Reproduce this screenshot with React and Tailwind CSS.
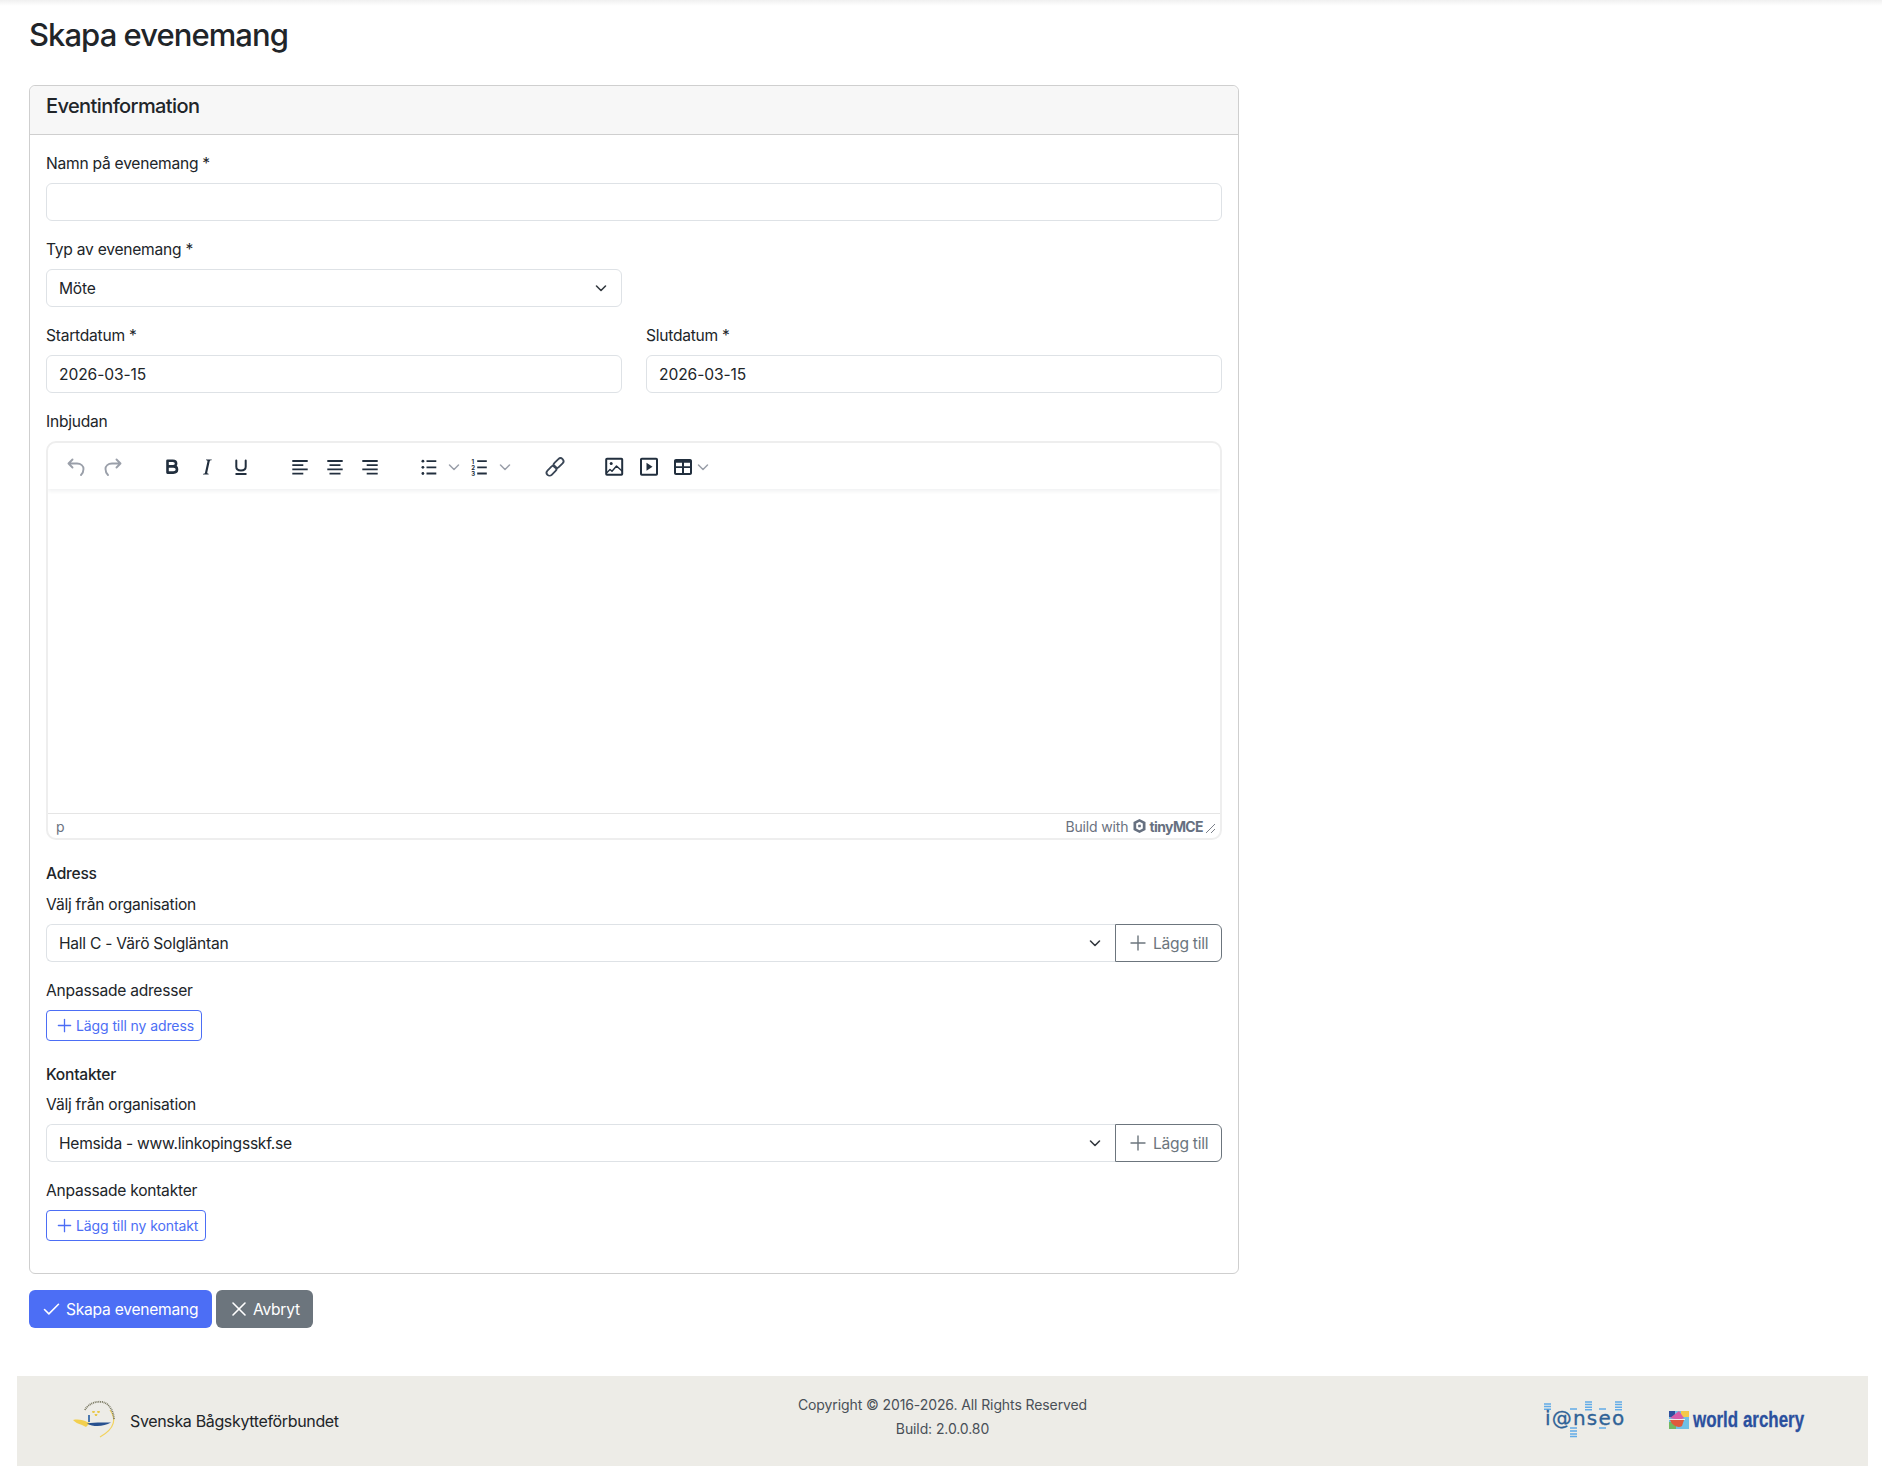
import React from "react";
import { Check, X, Plus } from "lucide-react";

const Chevron = ({ className = "" }) => (
  <svg width="16" height="16" viewBox="0 0 16 16" className={className} fill="none" stroke="#343a40" strokeWidth="1.600" strokeLinecap="round" strokeLinejoin="round">
    <path d="m3.500 6 4.500 4.500L12.500 6" />
  </svg>
);

const Field = ({ label, children, className = "" }) => (
  <div className={`mb-4 ${className}`}>
    <div className="mb-[7px] pt-[1px] text-[15.6px] leading-6 text-[#212529]">{label}</div>
    {children}
  </div>
);

const Box = ({ children, className = "" }) => (
  <div className={`flex h-[38px] items-center rounded-[6px] border border-[#dee2e6] bg-white px-[12px] text-[15.6px] leading-6 text-[#212529] ${className}`}>{children}</div>
);

const Val = ({ children }) => <span className="translate-y-[1px]">{children}</span>;

const Select = ({ children, className = "" }) => (
  <Box className={`justify-between ${className}`}>
    <Val>{children}</Val>
    <Chevron />
  </Box>
);

const Stroke = ({ children, c = "#222f3e", w = 1.900 }) => (
  <svg width="24" height="24" viewBox="0 0 24 24" fill="none" stroke={c} strokeWidth={w} strokeLinecap="round" strokeLinejoin="round" className="block">{children}</svg>
);

const Lines = ({ d }) => (
  <svg width="24" height="24" viewBox="0 0 24 24" fill="none" stroke="#222f3e" strokeWidth="1.800" className="block"><path d={d} /></svg>
);

const Btn = ({ className = "", children }) => <div className={`flex h-[24px] w-[24px] shrink-0 items-center justify-center ${className}`}>{children}</div>;

const Caret = () => (
  <svg width="24" height="24" viewBox="0 0 24 24" fill="none" stroke="#9a9fa9" strokeWidth="1.500" strokeLinecap="round" strokeLinejoin="round"><path d="m7.500 10 4.500 4.500 4.500-4.500" /></svg>
);

const Toolbar = () => (
  <div className="relative flex h-[46px] items-center pl-[16px] pt-[1px] shadow-[0_2px_4px_rgba(34,47,62,0.07)]">
    <Btn><Stroke c="#9a9fa9"><path d="M8.500 4.500 4.500 8.500l4 4M4.500 8.500H13c4 0 6.500 2.500 6.500 5.500 0 2.500-1 4.500-2.500 6" /></Stroke></Btn>
    <Btn className="ml-[13px]"><Stroke c="#9a9fa9"><path d="m15.500 4.500 4 4-4 4M19.500 8.500H11c-4 0-6.500 2.500-6.500 5.500 0 2.500 1 4.500 2.500 6" /></Stroke></Btn>
    <Btn className="ml-[35px]"><Stroke w={2.600}><path d="M7.500 5.800h5.300c2 0 3.300 1 3.300 2.800s-1.300 2.800-3.300 2.800H7.500h6c2.200 0 3.500 1.200 3.500 3.100 0 2-1.500 3.100-3.700 3.100H7.500Z" /></Stroke></Btn>
    <Btn className="ml-[11px]"><svg width="24" height="24" viewBox="0 0 24 24" fill="#222f3e"><path d="M11 4.500h5.800l-.2.800c-1.300 0-1.700.300-2 1.500l-2.300 10.400c-.2 1.100.2 1.400 1.500 1.500l-.2.800H7.900l.2-.8c1.300 0 1.800-.4 2-1.500l2.300-10.400c.2-1.200-.2-1.500-1.500-1.500l.1-.8Z" /></svg></Btn>
    <Btn className="ml-[10px]"><Stroke><path d="M7.300 5.500v6.300c0 2.500 1.700 3.700 4.700 3.700s4.700-1.200 4.700-3.700V5.500" strokeWidth="2" /><path d="M6.500 19h11" strokeWidth="1.800" strokeLinecap="butt" /></Stroke></Btn>
    <Btn className="ml-[35px]"><Lines d="M4.300 6h15.400M4.300 10.200h11M4.300 14.400h15.400M4.300 18.600h11" /></Btn>
    <Btn className="ml-[11px]"><Lines d="M4.300 6h15.400M6.500 10.200h11M4.300 14.400h15.400M6.500 18.600h11" /></Btn>
    <Btn className="ml-[11px]"><Lines d="M4.300 6h15.400M8.700 10.200h11M4.300 14.400h15.400M8.700 18.600h11" /></Btn>
    <Btn className="ml-[35px]"><svg width="24" height="24" viewBox="0 0 24 24" fill="#222f3e"><path d="M9.500 5.300h9.800v1.800H9.500zM9.500 11.400h9.800v1.800H9.500zM9.500 17.600h9.800v1.800H9.500z" /><circle cx="5.900" cy="6.200" r="1.400" /><circle cx="5.900" cy="12.300" r="1.400" /><circle cx="5.900" cy="18.500" r="1.400" /></svg></Btn>
    <Btn className="ml-[1px]"><Caret /></Btn>
    <Btn className="ml-[1px]"><svg width="24" height="24" viewBox="0 0 24 24" fill="#222f3e"><path d="M10.200 5.300h9.600v1.800h-9.600zM10.200 11.400h9.600v1.800h-9.600zM10.200 17.600h9.600v1.800h-9.600z" /><text x="4.500" y="8.500" fontSize="6" fontWeight="700" fontFamily="Inter, sans-serif">1</text><text x="4.200" y="14.800" fontSize="6" fontWeight="700" fontFamily="Inter, sans-serif">2</text><text x="4.200" y="21" fontSize="6" fontWeight="700" fontFamily="Inter, sans-serif">3</text></svg></Btn>
    <Btn className="ml-[2px]"><Caret /></Btn>
    <Btn className="ml-[26px]"><Stroke c="#3a4656" w={1.800}><rect x="2.800" y="12.800" width="11.500" height="6" rx="3" transform="rotate(-45 8.500 15.800)" /><rect x="9.800" y="5.200" width="11.500" height="6" rx="3" transform="rotate(-45 15.500 8.200)" /></Stroke></Btn>
    <Btn className="ml-[35px]"><Stroke w={2}><rect x="4.200" y="3.700" width="16" height="16" rx="0.800" /><circle cx="9.200" cy="8.500" r="1.500" fill="#222f3e" stroke="none" /><path d="m5 17.500 3-3 2 1.800 4.500-5.300L20 16" strokeWidth="1.400" /></Stroke></Btn>
    <Btn className="ml-[11px]"><svg width="24" height="24" viewBox="0 0 24 24" fill="#222f3e"><rect x="4" y="3.700" width="16" height="16" rx="0.800" fill="none" stroke="#222f3e" strokeWidth="2" /><path d="m9.500 7.700 6 4-6 4z" /></svg></Btn>
    <Btn className="ml-[10px]"><svg width="24" height="24" viewBox="0 0 24 24"><path fillRule="evenodd" fill="#222f3e" d="M5 4h14c1.700 0 1.900 1 2 2v12c0 1.200-.8 2-2 2H5c-1.200 0-2-.8-2-2V6c0-1.200.8-2 2-2Zm0 3.700v3.500h6V7.700H5Zm8 0v3.500h6V7.700h-6Zm-8 5.300v5h6v-5H5Zm8 0v5h6v-5h-6Z" /></svg></Btn>
    <Btn className="ml-[-4px]"><Caret /></Btn>
  </div>
);

const Editor = () => (
  <div className="flex h-[399px] flex-col overflow-hidden rounded-[10px] border-2 border-[#eeeeee] bg-white">
    <Toolbar />
    <div className="flex-1" />
    <div className="flex h-[25px] items-center justify-between border-t border-[#e5e5e5] pl-[8px] pr-[3px] text-[14px] tracking-[-0.15px] text-[#6b7280]">
      <span>p</span>
      <div className="flex items-center">
        <span className="mr-[5px]">Build with</span>
        <svg width="13" height="14" viewBox="0 0 13 14" className="mr-[3px]"><path fillRule="evenodd" fill="#667080" d="M6.500 0 12.500 3v8L6.500 14 .500 11V3L6.500 0ZM3.200 4.500v5l3.300 1.800 3.300-1.800v-5L6.500 2.700 3.200 4.500Zm2 1.200h2.600v2.600H5.200Z" /></svg>
        <span className="text-[14px] font-bold tracking-[-0.6px] text-[#667080]">tinyMCE</span>
        <svg width="12" height="12" viewBox="0 0 12 12" className="ml-[2px] mt-[4px]" stroke="#7b808a" strokeWidth="1"><path d="M1 11 10 2M6 11l4-4" /></svg>
      </div>
    </div>
  </div>
);

const GroupedSelect = ({ children }) => (
  <div className="flex">
    <Box className="flex-1 justify-between rounded-r-none border-r-0">
      <Val>{children}</Val>
      <Chevron />
    </Box>
    <div className="flex h-[38px] w-[107px] items-center gap-[3px] rounded-r-[6px] border border-[#6c757d] pl-[10px] text-[15.6px] text-[#6c757d]">
      <Plus size={24} strokeWidth={1.400} />
      <Val>Lägg till</Val>
    </div>
  </div>
);

const SmallButton = ({ children }) => (
  <div className="flex h-[31px] w-fit items-center gap-[1px] rounded-[4px] border border-[#4c6ef5] pl-[7px] pr-[7px] text-[14px] leading-[21px] tracking-[-0.1px] text-[#4c6ef5]">
    <Plus size={21} strokeWidth={1.500} />
    <span>{children}</span>
  </div>
);

const SbfLogo = () => (
  <svg width="44" height="42" viewBox="0 0 44 42" className="mb-[4px] block">
    <path d="M38 12C44 20 44 30 28 39" fill="none" stroke="#f2d25e" strokeWidth="1.200" />
    <path d="M13 12C16 5 28 1 35 6C40 10 42 17 42 22" fill="none" stroke="#77765f" strokeWidth="1.800" strokeDasharray="1 0.800" />
    <path d="M1 22C6 21 12 22 15 24L18 25L14 29L10 27C6 26 3 24 1 22Z" fill="#f2cf4f" />
    <path d="M15 25.500C22 24 32 24.500 39 24.500C32 28.500 22 29.500 15 25.500Z" fill="#27508f" />
    <rect x="16" y="17" width="2" height="7" fill="#4a78b0" />
    <path d="M20 13h3l-.6 2h-1.800zM25 13h3l-.6 2h-1.800zM22.500 16h3l-.6 2h-1.800z" fill="#e9c84a" />
  </svg>
);

const IanseoLogo = () => (
  <div className="relative mb-[4px] h-[40px] w-[84px]">
    <svg width="84" height="40" viewBox="0 0 84 40" className="absolute inset-0">
      <path d="M1 5h7M1 7.600h7M1 10.200h7M27 10h7M42 3h7M42 5.600h7M42 8.200h7M42 10.800h7M56 10h7M72 3h7M72 5.600h7M72 8.200h7M72 10.800h7M27 29h7M27 32h7M27 35h7M27 37.500h7M56 29h7" stroke="#62abe8" strokeWidth="1.500" />
    </svg>
    <span className="absolute left-[2px] top-[9px] font-['DejaVu_Sans',sans-serif] text-[20px] leading-[20px] tracking-[1.200px] text-[#2f6296] [-webkit-text-stroke:0.3px_#2f6296]">i@nseo</span>
  </div>
);

const WaLogo = () => (
  <div className="mb-[3px] flex items-center">
    <svg width="20" height="18" viewBox="0 0 20 18" className="mr-[4px]">
      <rect width="20" height="18" fill="#6fc0e8" />
      <rect width="6" height="6" fill="#2f4f9e" />
      <rect x="12" width="8" height="6" fill="#f4c84a" />
      <rect y="11" width="7" height="7" fill="#72b860" />
      <path d="M1 7 10 0l5 7-5 2Z" fill="#d85ca8" />
      <path d="M1 9h14l-2 6c-3 2-9 1-12-6Z" fill="#e05a3c" />
      <rect x="0" y="8" width="16" height="1" fill="#f4e8e8" />
    </svg>
    <span className="w-[112px] origin-left scale-x-[0.77] whitespace-nowrap font-['Liberation_Sans',sans-serif] text-[22px] font-bold leading-6 tracking-normal text-[#2b509e] [-webkit-text-stroke:0.3px_#2b509e]">world archery</span>
  </div>
);

export default function App() {
  return (
    <div className="relative min-h-[1478px] bg-white font-['Inter',sans-serif] tracking-[-0.25px] text-[#212529]">
      <div className="absolute inset-x-0 top-0 h-[6px] bg-gradient-to-b from-[#f0f0f0] to-white" />
      <div className="pl-[29px] pt-[16px]">
        <h1 className="h-[38px] text-[31px] font-medium leading-[38px] tracking-[-0.95px] text-[#212529]">Skapa evenemang</h1>
        <div className="mt-[31px] w-[1210px] rounded-[6px] border border-[#cfcfcf]">
          <div className="flex h-[49px] items-start rounded-t-[6px] border-b border-[#cfcfcf] bg-[#f7f7f7] px-[16px] pt-[8px] text-[20px] font-medium leading-6 tracking-[-0.6px]">Eventinformation</div>
          <div className="p-[16px]">
            <Field label="Namn på evenemang *"><Box /></Field>
            <div className="grid grid-cols-2 gap-x-[24px]">
              <Field label="Typ av evenemang *"><Select>Möte</Select></Field>
              <div />
              <Field label="Startdatum *"><Box className="tracking-[-0.1px]"><Val>2026-03-15</Val></Box></Field>
              <Field label="Slutdatum *"><Box className="tracking-[-0.1px]"><Val>2026-03-15</Val></Box></Field>
            </div>
            <Field label="Inbjudan"><Editor /></Field>
            <div className="mt-[22px] text-[15.6px] font-medium leading-6">Adress</div>
            <Field label="Välj från organisation" className="mt-[6px]"><GroupedSelect>Hall C - Värö Solgläntan</GroupedSelect></Field>
            <Field label="Anpassade adresser"><SmallButton>Lägg till ny adress</SmallButton></Field>
            <div className="mt-[22px] text-[15.6px] font-medium leading-6">Kontakter</div>
            <Field label="Välj från organisation" className="mt-[5px]"><GroupedSelect>Hemsida - www.linkopingsskf.se</GroupedSelect></Field>
            <Field label="Anpassade kontakter"><SmallButton>Lägg till ny kontakt</SmallButton></Field>
          </div>
        </div>
        <div className="mt-[16px] flex gap-[4px]">
          <div className="flex h-[38px] w-[183px] items-center gap-[4px] rounded-[6px] bg-[#4c6ef5] pl-[12px] text-[15.6px] text-white">
            <Check size={21} strokeWidth={1.800} />
            <Val>Skapa evenemang</Val>
          </div>
          <div className="flex h-[38px] w-[97px] items-center gap-[2px] rounded-[6px] bg-[#6c757d] pl-[11px] text-[15.6px] text-white">
            <X size={24} strokeWidth={1.600} />
            <Val>Avbryt</Val>
          </div>
        </div>
      </div>
      <footer className="mx-[17px] mt-[48px] flex h-[90px] w-[1851px] items-center justify-between bg-[#edece7]">
        <div className="flex w-[400px] items-center pl-[55px]">
          <SbfLogo />
          <span className="ml-[14px] text-base tracking-[-0.35px] text-[#212529]">Svenska Bågskytteförbundet</span>
        </div>
        <div className="mb-[8px] text-center text-[14px] leading-6 tracking-[-0.1px] text-[#495057]">
          <div>Copyright © 2016-2026. All Rights Reserved</div>
          <div>Build: 2.0.0.80</div>
        </div>
        <div className="flex w-[400px] items-center justify-end gap-[42px] pr-[63px]">
          <IanseoLogo />
          <WaLogo />
        </div>
      </footer>
    </div>
  );
}
